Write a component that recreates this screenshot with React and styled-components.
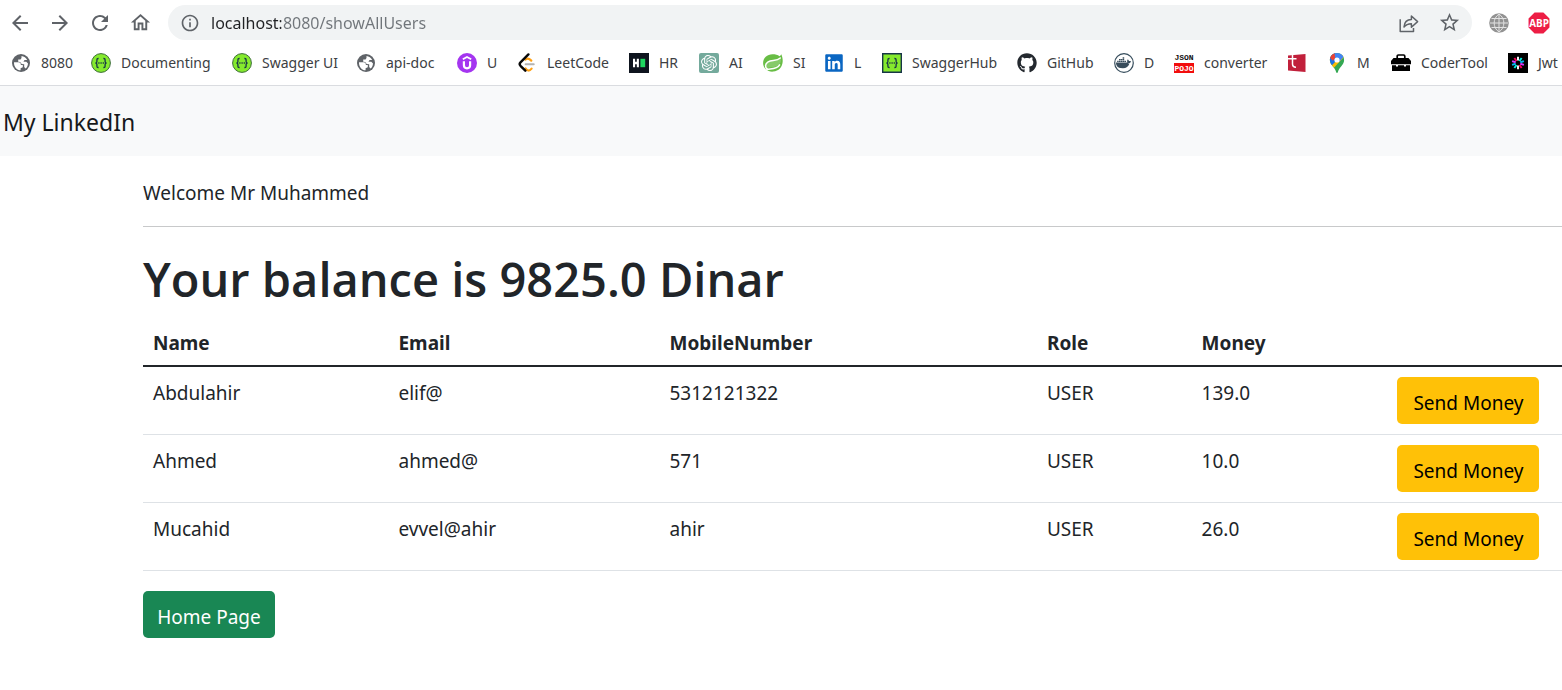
import React from "react";
import styled, { createGlobalStyle } from "styled-components";
import { MdArrowBack, MdArrowForward, MdRefresh, MdOutlineHome, MdInfoOutline, MdStarBorder } from "react-icons/md";
import { FaGithub, FaLinkedin, FaDocker } from "react-icons/fa";
import { SiOpenai } from "react-icons/si";

const GlobalStyle = createGlobalStyle`
  * { box-sizing: border-box; }
  body {
    margin: 0;
    background: #fff;
    color: #212529;
    font-family: "Noto Sans", "Open Sans", sans-serif;
    overflow-x: hidden;
  }
`;

const Browser = styled.header`
  border-bottom: 1px solid #dadce0;
  background: #fff;
`;

const Toolbar = styled.div`
  display: flex;
  align-items: center;
  height: 45px;
  padding: 0 3px 0 0;
`;

const IconButton = styled.button`
  display: grid;
  place-items: center;
  flex: none;
  width: ${(p) => p.$width || 40}px;
  height: 34px;
  padding: 0;
  border: 0;
  background: none;
  color: #5f6368;
  cursor: pointer;
`;

const NavButtons = styled.nav`
  display: flex;
`;

const AddressBar = styled.div`
  display: flex;
  align-items: center;
  flex: 1;
  height: 35px;
  margin: 0 7px 0 8px;
  padding: 0 3px 0 8px;
  border-radius: 18px;
  background: #f1f3f4;
`;

const AddressInput = styled.input`
  flex: 1;
  min-width: 0;
  height: 28px;
  margin-left: 7px;
  padding: 0;
  border: 0;
  outline: 0;
  font: 16px/28px "Noto Sans", sans-serif;
  color: transparent;
  caret-color: #202124;
  background: linear-gradient(90deg, #202124 70px, #70757a 70px);
  -webkit-background-clip: text;
  background-clip: text;
`;

const BookmarkBar = styled.nav`
  display: grid;
  grid-template-columns: 80px 141px 124px 101px 60px 112px 70px 64px 61px 58px 135px 97px 60px 113px 40px 64px 117px 80px;
  align-items: center;
  height: 40px;
  padding: 0 0 4px 11px;
  overflow: hidden;
`;

const Bookmark = styled.a`
  display: flex;
  align-items: center;
  gap: 10px;
  color: #3c4043;
  font-size: 14px;
  line-height: 20px;
  white-space: nowrap;
  text-decoration: none;
  svg { flex: none; }
`;

const SiteHeader = styled.header`
  display: flex;
  align-items: center;
  height: 70px;
  padding: 2px 3px 0;
  background: #f8f9fa;
`;

const Brand = styled.a`
  color: #16181b;
  font-size: 23px;
  line-height: 36px;
  text-decoration: none;
`;

const Content = styled.main`
  padding: 22px 0 40px 143px;
  font-size: 19px;
  line-height: 30px;
`;

const Welcome = styled.p`
  margin: 0;
`;

const Divider = styled.hr`
  height: 1px;
  margin: 18px 0 22px;
  border: 0;
  background: #c8c9ca;
`;

const Balance = styled.h1`
  margin: 0 0 8px;
  font-family: "Open Sans", sans-serif;
  font-size: 47px;
  font-weight: 600;
  line-height: 60px;
  white-space: nowrap;
`;

const UserTable = styled.table`
  width: 100%;
  margin-bottom: 20px;
  border-collapse: collapse;
  table-layout: fixed;
`;

const Column = styled.col`
  width: ${(p) => p.$share};
`;

const HeadCell = styled.th`
  height: 49px;
  padding: 10px 10px 7px;
  border-bottom: 2px solid #212529;
  font-weight: 700;
  text-align: left;
`;

const Cell = styled.td`
  height: 68px;
  padding: ${(p) => (p.$action ? 10 : 11)}px 10px 10px;
  border-bottom: 1px solid #dee2e6;
  vertical-align: top;
`;

const ActionButton = styled.button`
  display: block;
  width: ${(p) => p.$width}px;
  height: 47px;
  padding: 5px 0 0;
  border: 0;
  border-radius: 5px;
  background: ${(p) => (p.$success ? "#198754" : "#ffc107")};
  color: ${(p) => (p.$success ? "#fff" : "#000")};
  font: inherit;
  white-space: nowrap;
  cursor: pointer;
`;

const Icon = ({ size = 20, children }) => (
  <svg width={size} height={size} viewBox="0 0 20 20" aria-hidden="true">{children}</svg>
);

const GlobeIcon = () => (
  <Icon>
    <circle cx="10" cy="10" r="9" fill="#5f6368" />
    <path fill="#fff" d="M3 9.200h4.500c1.500 0 2.300.8 2.300 1.900v.8h2v2.300l-2.200 1v2.100C5.800 17.100 2.800 13.800 3 9.200zM10.500 3c2.500.2 4.600 1.700 5.700 3.900h-2.700l-1 1.900h2.800l1.700 1.600c-.1 2.200-1 4-2.500 5.200l-1.300-1.500v-2.800l-2.500-.2-1.500-2-2-.3V6.400h2.300l1-1.500z" />
  </Icon>
);

const Braces = () => (
  <g stroke="#173647" fill="none" strokeWidth="1.3">
    <path d="M7.600 5.500h-.5c-.9 0-1.200.5-1.200 1.300v1.600c0 1-.5 1.600-1.500 1.600 1 0 1.500.6 1.500 1.600v1.600c0 .8.300 1.300 1.200 1.300h.5M12.400 5.500h.5c.9 0 1.200.5 1.200 1.300v1.600c0 1 .5 1.600 1.500 1.600-1 0-1.500.6-1.500 1.600v1.600c0 .8-.3 1.300-1.200 1.300h-.5" />
    <path d="M7.300 10h1.200M9.500 10h1.200M11.700 10h1.200" />
  </g>
);

const SwaggerIcon = () => (
  <Icon><circle cx="10" cy="10" r="9.400" fill="#85ea2d" stroke="#3c6c3a" /><Braces /></Icon>
);

const SwaggerHubIcon = () => (
  <Icon><path d="M.7.7h18.600v18.600H.7z" fill="#85ea2d" stroke="#173647" strokeWidth="1.400" /><Braces /></Icon>
);

const UdemyIcon = () => (
  <Icon>
    <circle cx="10" cy="10" r="10" fill="#a435f0" />
    <path d="M5.800 6.300L10 3.900l4.200 2.400" fill="none" stroke="#fff" strokeWidth="1.700" />
    <path d="M6.900 8.300v4c0 4 6.200 4 6.200 0v-4" fill="none" stroke="#fff" strokeWidth="2.200" />
  </Icon>
);

const LeetCodeIcon = () => (
  <Icon>
    <path d="M8.300 6.600c1.800-1.600 3.700-1.300 6 1M8.500 15.400c1.800 2.800 4 2.800 6.100.2" fill="none" stroke="#ffa116" strokeWidth="2.200" strokeLinecap="round" />
    <path d="M11.400 1.400L3.500 9.300c-1.100 1.100-1.100 2.300 0 3.500l4.800 4.900" fill="none" stroke="#080808" strokeWidth="2.400" strokeLinecap="round" />
    <path d="M8.700 11.300h8" stroke="#b3b3b3" strokeWidth="2.100" strokeLinecap="round" />
  </Icon>
);

const HackerRankIcon = () => (
  <Icon>
    <path d="M0 0h20v20H0z" fill="#0e141e" />
    <path d="M4 5.800h2.100v3h1.700v-3h2.100v8.400H7.800v-3H6.100v3H4z" fill="#fff" />
    <path d="M11.400 5.800h4.800v8.400h-4.800z" fill="#1ed760" />
  </Icon>
);

const ChatIcon = () => (
  <Icon>
    <rect width="20" height="20" rx="2" fill="#74aa9c" />
    <SiOpenai x="2" y="2" size={16} color="#fff" />
  </Icon>
);

const SpringIcon = () => (
  <Icon>
    <path fill="#68bd45" d="M18.300 1.200c1 2.200 1.500 4.500 1.400 7.100-.2 5.900-4 9.900-9.500 10.300C4.500 19 .2 15.300.1 10.200.1 5 4.100 1.300 9.500 1.300c2.800 0 5.200.6 7 2 .8-.6 1.300-1.200 1.800-2.100z" />
    <path fill="#fff" d="M17.500 4.800C14 8.500 9 6.900 5.500 8.300c-4 1.600-4.300 5.600-2.200 8.100l1.300.6c-.6-1.400.3-2.300 2-2.500 3.600-.4 8.200-.4 10.500-4.200 1-1.700 1.100-3.600.4-5.500z" opacity=".2" />
    <path fill="none" stroke="#fff" strokeWidth="1.500" strokeLinecap="round" d="M17.300 5c-3.800 3.600-8.500 1.600-12.200 3.900-3.300 2.100-3.200 5.500-.9 7.300 4.500-.7 9.900.1 12.400-4.400" />
    <circle cx="4.300" cy="16.500" r="1.100" fill="#fff" />
  </Icon>
);

const DockerIcon = () => (
  <Icon>
    <circle cx="10" cy="10" r="9.300" fill="#fff" stroke="#364d5c" strokeWidth="1.200" />
    <FaDocker x="2" y="2" size={15} color="#394d5c" />
    <path d="M3 10.500h12.500c-1 3.200-3.200 4.700-6.600 4.700-3.700 0-5.500-1.600-5.900-4.700z" fill="#394d5c" />
  </Icon>
);

const PojoIcon = () => (
  <Icon>
    <path d="M0 10h20v10H0z" fill="#f20d0d" />
    <g fontFamily="Liberation Mono" fontSize="8" fontWeight="700" textAnchor="middle">
      <text x="10" y="7" fill="#111">JSON</text>
      <text x="10" y="18" fill="#fff">POJO</text>
    </g>
  </Icon>
);

const RedBookIcon = () => (
  <Icon>
    <path d="M1 2.500L18.500 1v18L1 17.500z" fill="#c1203b" />
    <path d="M0 5.800h9.500M5.500 0v11c0 2.300 1 3.200 3.500 3.200" fill="none" stroke="#fff" strokeWidth="1.500" />
  </Icon>
);

const MapIcon = () => (
  <Icon>
    <defs>
      <clipPath id="pin"><path d="M10 0C5.900 0 2.900 3 2.900 7c0 2.500 1.100 4.200 2.800 6.200C7.600 15.500 8.500 17 9.100 19c.3 1.200 1.500 1.200 1.800 0 .6-2 1.500-3.500 3.400-5.800 1.700-2 2.800-3.700 2.800-6.200 0-4-3-7-7.100-7z" /></clipPath>
    </defs>
    <g clipPath="url(#pin)">
      <path d="M0 0h20v20H0z" fill="#34a853" />
      <path d="M0 15V6l10-1 5.700-4L17 4 6.200 15.500z" fill="#fbbc04" />
      <path d="M0 0h8l2 7-5 5.300-5-4z" fill="#1a73e8" />
      <path d="M0 0h7.600L9 4 6 7.700 2 4z" fill="#ea4335" />
      <path d="M7.500 0H20l-8 9-3.500-2z" fill="#4285f4" />
    </g>
    <circle cx="10" cy="7" r="2.600" fill="#fff" />
  </Icon>
);

const ToolboxIcon = () => (
  <Icon>
    <path d="M6.200 5V3.200c0-.7.400-1.200 1.200-1.200h5.200c.8 0 1.200.5 1.200 1.200V5" fill="none" stroke="#000" strokeWidth="1.700" />
    <path d="M2.500 5h15L20 8v3.300H0V8z" />
    <path d="M1 12.300h4v1.200h2v-1.200h6v1.200h2v-1.200h4V18H1z" />
  </Icon>
);

const JwtIcon = () => (
  <Icon>
    <path d="M0 0h20v20H0z" fill="#000" />
    <g strokeWidth="1.900">
      {["#fff", "#00f2e6", "#00b9f1", "#d63aff", "#fb015b", "#fff", "#00f2e6", "#00b9f1", "#d63aff", "#fb015b"].map((color, i) => (
        <path key={i} d="M10 3.800v3.800" stroke={color} transform={`rotate(${i * 36} 10 10)`} />
      ))}
    </g>
  </Icon>
);

const ShareIcon = () => (
  <Icon>
    <path d="M1.200 6.200v12.300h13.300v-3.600M5 14c.4-5 3.200-7.500 7.400-7.500V3l6.200 5.600-6.200 5.600v-3.500c-3.400 0-5.600 1-7.400 3.300z" fill="none" stroke="#5f6368" strokeWidth="1.500" strokeLinejoin="round" />
  </Icon>
);

const GreyGlobeIcon = () => (
  <Icon>
    <circle cx="10" cy="10" r="9.800" fill="#929292" />
    <path d="M10 1v18M1 10h18M2.500 5.500h15M2.500 14.500h15M10 1C3.500 5.500 3.500 14.500 10 19M10 1c6.500 4.500 6.500 13.500 0 18" fill="none" stroke="#e2e2e2" strokeWidth="1" />
  </Icon>
);

const AdblockIcon = () => (
  <Icon size={22}>
    <path d="M6 .5h8L19.500 6v8L14 19.500H6L.5 14V6z" fill="#ed1e45" />
    <text x="10" y="13.300" fill="#fff" fontFamily="Open Sans" fontSize="9" fontWeight="700" textAnchor="middle">ABP</text>
  </Icon>
);

const bookmarks = [
  ["8080", GlobeIcon],
  ["Documenting", SwaggerIcon],
  ["Swagger UI", SwaggerIcon],
  ["api-doc", GlobeIcon],
  ["U", UdemyIcon],
  ["LeetCode", LeetCodeIcon],
  ["HR", HackerRankIcon],
  ["AI", ChatIcon],
  ["SI", SpringIcon],
  ["L", () => <FaLinkedin size={20} color="#0a66c2" />],
  ["SwaggerHub", SwaggerHubIcon],
  ["GitHub", () => <FaGithub size={20} color="#24292f" />],
  ["D", DockerIcon],
  ["converter", PojoIcon],
  ["", RedBookIcon],
  ["M", MapIcon],
  ["CoderTool", ToolboxIcon],
  ["Jwt", JwtIcon],
];

const columns = [
  ["Name", "17.3%"],
  ["Email", "19.1%"],
  ["MobileNumber", "26.6%"],
  ["Role", "10.9%"],
  ["Money", "13.8%"],
  ["", "auto"],
];

const users = [
  ["Abdulahir", "elif@", "5312121322", "USER", "139.0"],
  ["Ahmed", "ahmed@", "571", "USER", "10.0"],
  ["Mucahid", "evvel@ahir", "ahir", "USER", "26.0"],
];

export default function App() {
  return (
    <>
      <GlobalStyle />
      <Browser>
        <Toolbar>
          <NavButtons>
            <IconButton aria-label="Back"><MdArrowBack size={24} /></IconButton>
            <IconButton aria-label="Forward"><MdArrowForward size={24} /></IconButton>
            <IconButton aria-label="Reload"><MdRefresh size={24} /></IconButton>
            <IconButton aria-label="Home"><MdOutlineHome size={23} /></IconButton>
          </NavButtons>
          <AddressBar>
            <IconButton aria-label="Site information" $width={28}><MdInfoOutline size={20} /></IconButton>
            <AddressInput aria-label="Address" defaultValue="localhost:8080/showAllUsers" />
            <IconButton aria-label="Share"><ShareIcon /></IconButton>
            <IconButton aria-label="Bookmark this page"><MdStarBorder size={23} /></IconButton>
          </AddressBar>
          <IconButton aria-label="Web extension"><GreyGlobeIcon /></IconButton>
          <IconButton aria-label="Ad blocker"><AdblockIcon /></IconButton>
        </Toolbar>
        <BookmarkBar aria-label="Bookmarks">
          {bookmarks.map(([label, Glyph], i) => (
            <Bookmark key={i} href="#" aria-label={label || "Bookmark"}>
              <Glyph />
              {label}
            </Bookmark>
          ))}
        </BookmarkBar>
      </Browser>
      <SiteHeader>
        <Brand href="#">My LinkedIn</Brand>
      </SiteHeader>
      <Content>
        <Welcome>Welcome Mr Muhammed</Welcome>
        <Divider />
        <Balance>Your balance is 9825.0 Dinar</Balance>
        <UserTable>
          <colgroup>
            {columns.map(([name, share]) => <Column key={name} $share={share} />)}
          </colgroup>
          <thead>
            <tr>{columns.map(([name]) => <HeadCell key={name} scope="col">{name}</HeadCell>)}</tr>
          </thead>
          <tbody>
            {users.map((user) => (
              <tr key={user[0]}>
                {user.map((value, i) => <Cell key={i}>{value}</Cell>)}
                <Cell $action><ActionButton type="button" $width={142}>Send Money</ActionButton></Cell>
              </tr>
            ))}
          </tbody>
        </UserTable>
        <ActionButton type="button" $success $width={132}>Home Page</ActionButton>
      </Content>
    </>
  );
}
